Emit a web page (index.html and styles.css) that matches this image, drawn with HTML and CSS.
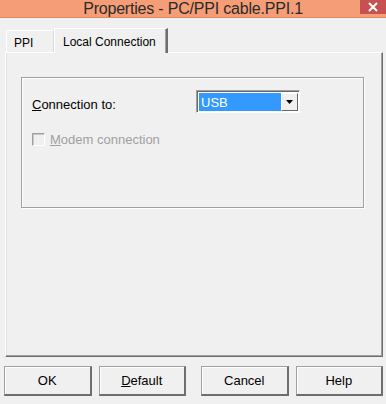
FILE: index.html
```html
<!DOCTYPE html>
<html lang="en">
<head>
    <meta charset="UTF-8">
    <title>Properties - PC/PPI cable.PPI.1</title>
    <link rel="stylesheet" href="styles.css">
</head>
<body>
    <div class="titlebar">
        <span></span>
        <div class="title">Properties - PC/PPI cable.PPI.1</div>
        <div class="close">
            <svg width="12" height="10" viewBox="0 0 12 10"><path d="M2 1 L10 9 M10 1 L2 9" stroke="#fff" stroke-width="2"/></svg>
        </div>
    </div>

    <div class="dialog">
        <div class="tabs">
            <div class="tab">PPI</div>
            <div class="tab active">Local Connection</div>
        </div>
        <div class="panel">
            <div class="group">
                <div class="row">
                    <label class="label"><u>C</u>onnection to:</label>
                    <div class="combo">
                        <div class="combo-value">USB</div>
                        <div class="combo-btn">
                            <svg width="7" height="4" viewBox="0 0 7 4"><path d="M0 0 H7 L3.5 4 Z" fill="#000"/></svg>
                        </div>
                    </div>
                </div>
                <div class="check-row">
                    <span class="checkbox"></span>
                    <span class="check-label"><u>M</u>odem connection</span>
                </div>
            </div>
        </div>
        <div class="buttons">
            <button class="btn">OK</button>
            <button class="btn"><u>D</u>efault</button>
            <button class="btn wide-gap">Cancel</button>
            <button class="btn">Help</button>
        </div>
    </div>
</body>
</html>
```

FILE: styles.css
```css
body {
    margin: 0;
    width: 386px;
    height: 404px;
    overflow: hidden;
    background: #f0f0f0;
    font-family: 'Liberation Sans', Arial, sans-serif;
    font-size: 13px;
    color: #000;
}
.titlebar {
    height: 17px;
    background: #f49d76;
    border-bottom: 1px solid #e4865c;
    display: grid;
    grid-template-columns: 26px 1fr 26px;
}
.title {
    text-align: center;
    font-size: 16px;
    line-height: 17px;
    color: #2b2b2b;
    letter-spacing: -0.2px;
}
.close {
    height: 14px;
    background: #c75050;
    display: flex;
    justify-content: center;
    align-items: center;
}
.dialog {
    padding: 10px 3px 0 5px;
}
.tabs {
    display: flex;
    align-items: flex-end;
    height: 24px;
    padding-left: 1px;
    font-size: 12px;
}
.tab {
    box-sizing: border-box;
    height: 22px;
    width: 48px;
    padding: 5px 0 0 7px;
    border-top: 1px solid #fff;
    border-left: 1px solid #fff;
    border-right: 1px solid #d8d8d8;
}
.tab.active {
    position: relative;
    z-index: 1;
    width: 114px;
    height: 25px;
    margin-bottom: -1px;
    padding: 6px 0 0 8px;
    background: #f0f0f0;
    border-right: 2px solid #6e6e6e;
    box-shadow: inset -1px 0 0 #a0a0a0;
}
.panel {
    box-sizing: border-box;
    width: 378px;
    height: 305px;
    border-top: 1px solid #fff;
    border-left: 1px solid #fff;
    border-right: 1px solid #6e6e6e;
    border-bottom: 1px solid #6e6e6e;
    box-shadow: inset -1px -1px 0 #a0a0a0, inset 1px 0 0 #e3e3e3;
    padding: 24px 0 0 15px;
}
.group {
    box-sizing: border-box;
    width: 343px;
    height: 131px;
    border: 1px solid #a0a0a0;
    box-shadow: 1px 1px 0 #fff, inset 1px 1px 0 #fff;
    padding: 12px 0 0 10px;
}
.row {
    display: flex;
    align-items: center;
}
.label {
    width: 164px;
    padding-top: 6px;
}
.combo {
    box-sizing: border-box;
    width: 104px;
    height: 23px;
    display: flex;
    border-top: 1px solid #a0a0a0;
    border-left: 1px solid #a0a0a0;
    border-right: 1px solid #fff;
    border-bottom: 1px solid #fff;
    box-shadow: inset 1px 1px 0 #696969;
    padding: 2px 1px 1px 2px;
    background: #fff;
}
.combo-value {
    flex: 1;
    background: #3399ff;
    color: #fff;
    padding-left: 2px;
    line-height: 19px;
}
.combo-btn {
    box-sizing: border-box;
    width: 17px;
    background: #f0f0f0;
    border-top: 1px solid #fff;
    border-left: 1px solid #fff;
    border-right: 1px solid #696969;
    border-bottom: 1px solid #696969;
    display: flex;
    justify-content: center;
    align-items: center;
}
.check-row {
    display: flex;
    align-items: center;
    margin-top: 19px;
    color: #a0a0a0;
}
.checkbox {
    box-sizing: border-box;
    width: 13px;
    height: 13px;
    border-top: 1px solid #a0a0a0;
    border-left: 1px solid #a0a0a0;
    border-right: 1px solid #fff;
    border-bottom: 1px solid #fff;
    box-shadow: inset 1px 1px 0 #c8c8c8;
    margin-right: 5px;
}
.buttons {
    display: flex;
    margin: 9px 0 0 -1px;
    gap: 7px;
}
.btn {
    box-sizing: border-box;
    width: 88px;
    height: 30px;
    padding: 0;
    font-family: 'Liberation Sans', Arial, sans-serif;
    font-size: 13px;
    color: #000;
    background: #f0f0f0;
    border-top: 1px solid #a0a0a0;
    border-left: 1px solid #a0a0a0;
    border-right: 2px solid #6e6e6e;
    border-bottom: 2px solid #6e6e6e;
    box-shadow: inset 1px 1px 0 #fff;
}
.btn.wide-gap {
    margin-left: 8px;
}
```
